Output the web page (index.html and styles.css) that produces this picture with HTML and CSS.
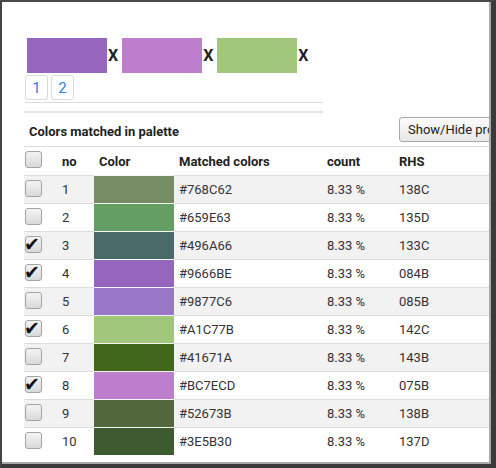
FILE: index.html
```html
<!DOCTYPE html>
<html>
<head>
<meta charset="utf-8">
<link rel="stylesheet" href="styles.css">
</head>
<body>
<div class="frame">
  <div class="inner">
    <div class="content">
      <div class="picked">
        <span class="pick" style="background:#9666BE"></span><span class="x">X</span>
        <span class="pick" style="background:#BC7ECD"></span><span class="x">X</span>
        <span class="pick" style="background:#A1C77B"></span><span class="x">X</span>
      </div>
      <div class="pager">
        <span class="page">1</span><span class="page">2</span>
      </div>
      <div class="rule"></div>
      <div class="titlebar">
        <span class="title">Colors matched in palette</span>
        <span class="btn">Show/Hide products</span>
      </div>
      <table class="grid">
        <colgroup>
          <col class="c-cb"><col class="c-no"><col class="c-color"><col class="c-match"><col class="c-count"><col class="c-rhs">
        </colgroup>
        <thead>
          <tr><th class="cbcell"><span class="cb"></span></th><th>no</th><th>Color</th><th>Matched colors</th><th>count</th><th>RHS</th></tr>
        </thead>
        <tbody>
          <tr class="odd"><td class="cbcell"><span class="cb"></span></td><td>1</td><td class="sw" style="background:#768C62"></td><td>#768C62</td><td>8.33 %</td><td>138C</td></tr>
          <tr><td class="cbcell"><span class="cb"></span></td><td>2</td><td class="sw" style="background:#659E63"></td><td>#659E63</td><td>8.33 %</td><td>135D</td></tr>
          <tr class="odd"><td class="cbcell"><span class="cb on">✔</span></td><td>3</td><td class="sw" style="background:#496A66"></td><td>#496A66</td><td>8.33 %</td><td>133C</td></tr>
          <tr><td class="cbcell"><span class="cb on">✔</span></td><td>4</td><td class="sw" style="background:#9666BE"></td><td>#9666BE</td><td>8.33 %</td><td>084B</td></tr>
          <tr class="odd"><td class="cbcell"><span class="cb"></span></td><td>5</td><td class="sw" style="background:#9877C6"></td><td>#9877C6</td><td>8.33 %</td><td>085B</td></tr>
          <tr><td class="cbcell"><span class="cb on">✔</span></td><td>6</td><td class="sw" style="background:#A1C77B"></td><td>#A1C77B</td><td>8.33 %</td><td>142C</td></tr>
          <tr class="odd"><td class="cbcell"><span class="cb"></span></td><td>7</td><td class="sw" style="background:#41671A"></td><td>#41671A</td><td>8.33 %</td><td>143B</td></tr>
          <tr><td class="cbcell"><span class="cb on">✔</span></td><td>8</td><td class="sw" style="background:#BC7ECD"></td><td>#BC7ECD</td><td>8.33 %</td><td>075B</td></tr>
          <tr class="odd"><td class="cbcell"><span class="cb"></span></td><td>9</td><td class="sw" style="background:#52673B"></td><td>#52673B</td><td>8.33 %</td><td>138B</td></tr>
          <tr><td class="cbcell"><span class="cb"></span></td><td>10</td><td class="sw" style="background:#3E5B30"></td><td>#3E5B30</td><td>8.33 %</td><td>137D</td></tr>
        </tbody>
      </table>
    </div>
  </div>
</div>
</body>
</html>
```
FILE: styles.css
```css
html, body {
  margin: 0;
  padding: 0;
  background: #fff;
}
body {
  font-family: Roboto, "Liberation Sans", Arial, sans-serif;
  color: #333;
}
.frame {
  width: 496px;
  height: 468px;
  box-sizing: border-box;
  border-left: 2px solid #444;
  border-top: 2px solid #4a4a4a;
  border-right: 5px solid #3a3a3a;
  border-bottom: 4px solid #3a3a3a;
  overflow: hidden;
}
.inner {
  height: 100%;
  box-sizing: border-box;
  border-right: 2px solid #a9a9a9;
  border-bottom: 2px solid #a9a9a9;
  overflow: hidden;
  background: #fff;
}
.content {
  padding: 36px 0 0 22px;
  width: 700px;
}
.picked {
  display: flex;
  align-items: center;
  margin-left: 3px;
  height: 35px;
}
.pick {
  display: block;
  width: 80px;
  height: 35px;
}
.x {
  font-weight: bold;
  font-size: 16px;
  color: #222;
  margin: 0 4px 0 1px;
}
.pager {
  display: flex;
  gap: 3px;
  margin-top: 2px;
  margin-left: 1px;
  width: 298px;
  padding-bottom: 2px;
  border-bottom: 1px solid #dcdcdc;
}
.page {
  display: flex;
  align-items: center;
  justify-content: center;
  width: 21px;
  height: 23px;
  border: 1px solid #dadada;
  border-radius: 3px;
  color: #2b7de0;
  font-size: 15px;
}
.rule {
  width: 299px;
  height: 2px;
  margin-top: 8px;
  background: #e3e3e3;
}
.titlebar {
  display: flex;
  align-items: center;
  box-sizing: border-box;
  height: 34px;
  padding-top: 4px;
  border-bottom: 1px solid #dcdcdc;
}
.title {
  width: 370px;
  padding-left: 5px;
  font-weight: bold;
  font-size: 13px;
  color: #222;
}
.btn {
  display: flex;
  align-items: center;
  height: 23px;
  margin-top: -4px;
  padding: 0 8px;
  border: 1px solid #a8a8a8;
  border-radius: 3px;
  background: linear-gradient(#fbfbfb, #e8e8e8);
  font-size: 13px;
  color: #222;
  white-space: nowrap;
}
.grid {
  border-collapse: separate;
  border-spacing: 0;
  table-layout: fixed;
  width: 500px;
  font-size: 13px;
}
.c-cb { width: 33px; }
.c-no { width: 37px; }
.c-color { width: 80px; }
.c-match { width: 148px; }
.c-count { width: 72px; }
.c-rhs { width: 130px; }
.grid th, .grid td {
  height: 27px;
  padding: 0 0 0 5px;
  text-align: left;
  vertical-align: middle;
  white-space: nowrap;
}
.grid th {
  height: 28px;
  font-weight: bold;
  color: #222;
}
.grid td {
  border-top: 1px solid #dcdcdc;
}
.grid td.sw {
  padding: 0;
  border-top-color: #f4f4f4;
}
.grid tr.odd td {
  background-color: #f2f2f2;
}
.grid tr.odd td.sw {
  background-color: initial;
}
.grid .cbcell {
  padding-left: 1px;
}
.cb {
  display: block;
  box-sizing: border-box;
  width: 17px;
  height: 17px;
  margin-top: -3px;
  border: 1px solid #a3a3a3;
  border-radius: 3px;
  background: linear-gradient(#f3f3f3, #d9d9d9);
  font-family: "DejaVu Sans", sans-serif;
  font-size: 19px;
  line-height: 14px;
  text-indent: -3px;
  text-align: center;
  color: #111;
  overflow: visible;
}
```
